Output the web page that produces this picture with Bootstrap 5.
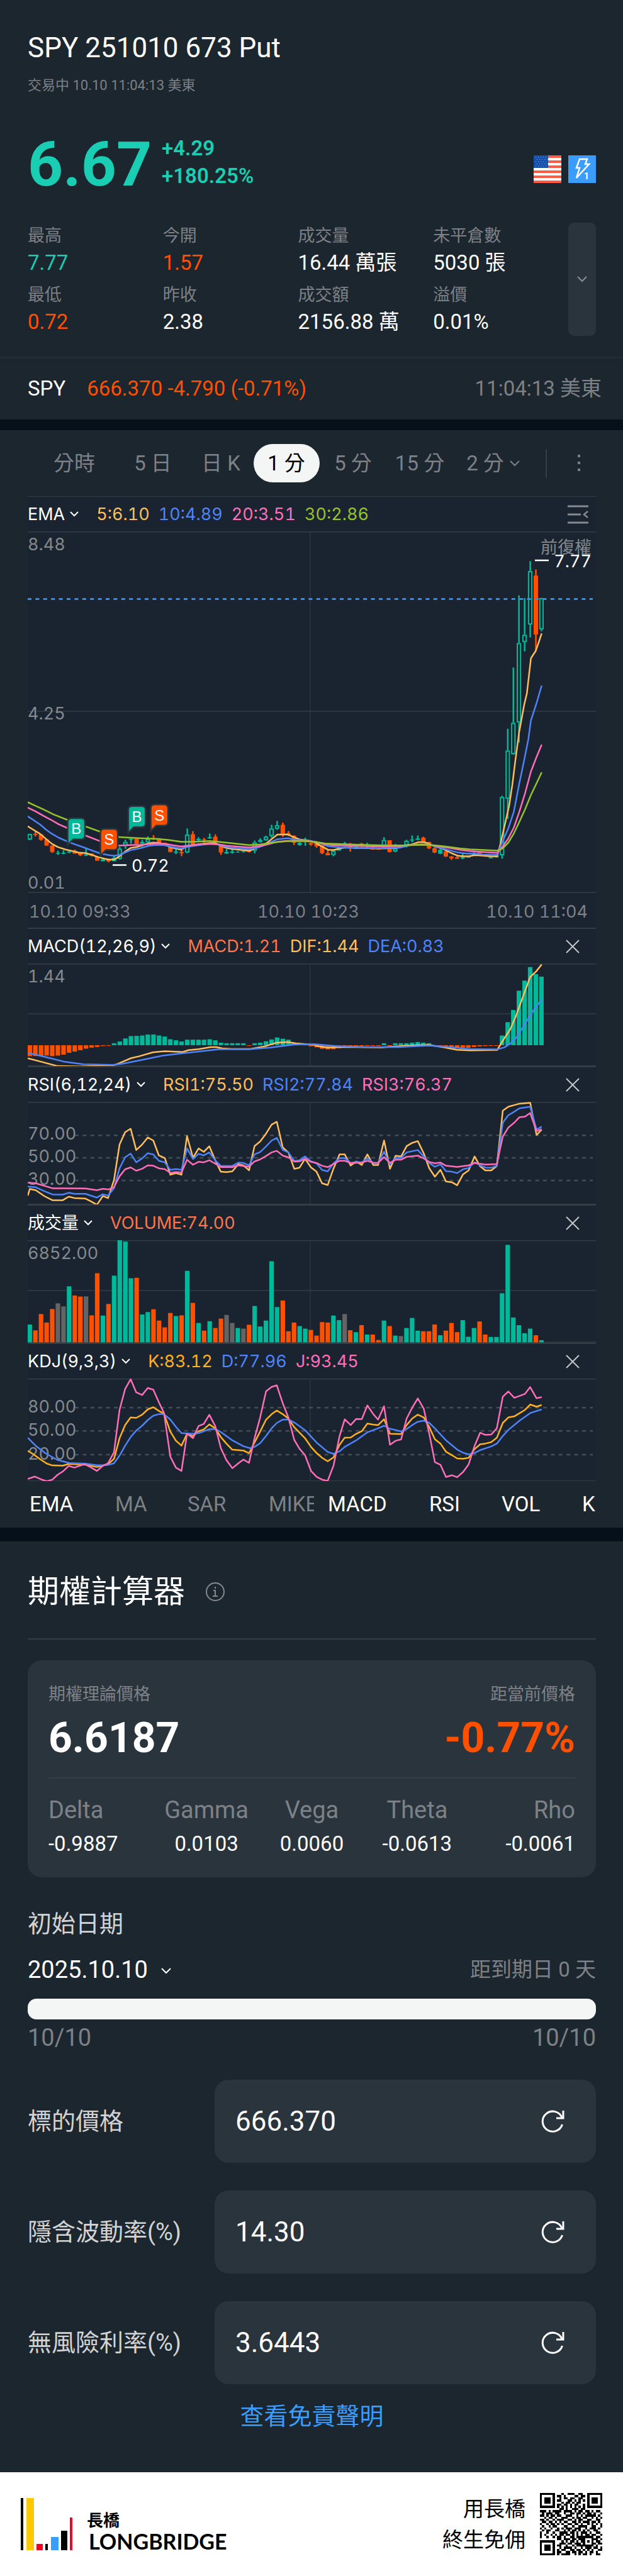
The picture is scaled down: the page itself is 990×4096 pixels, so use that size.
<!DOCTYPE html>
<html lang="zh-Hant">
<head>
<meta charset="utf-8">
<meta name="viewport" content="width=device-width, initial-scale=1">
<title>SPY 251010 673 Put</title>
<link href="https://cdn.jsdelivr.net/npm/bootstrap@5.3.0/dist/css/bootstrap.min.css" rel="stylesheet">
<style>
  :root{--page:#1c262e;--panel:#192430;--box:#2a343c;--band:#05101a;--rule:#333d45;--dim:#7d8187;--up:#00b99a;--down:#ff5000;--mint:#19ceb2;--pale:#d2d3d4}
  body{background:var(--page);color:#fff;font-family:Roboto,"Noto Sans CJK TC",sans-serif;font-size:33px;line-height:48px}
  button{font:inherit;color:inherit;background:none;border:0;padding:0}
  svg{display:block;flex:none}
  .side{padding-left:44px;padding-right:43px}
  .dim{color:var(--dim)} .up{color:var(--mint)} .down{color:var(--down)} .pale{color:var(--pale)}
  .band{background:var(--band)}
  .band-a{height:17px} .band-b{height:22px}
  .title{font-size:44px;line-height:50px;font-weight:400;padding-top:51px;margin:0}
  .subtitle{font-size:22px;line-height:28px;margin-top:21px}
  .price-row{margin-top:64px}
  .price{font-size:98px;line-height:80px;font-weight:700}
  .change{line-height:44px;font-weight:600;margin-left:16px}
  .tags{gap:11px;margin-bottom:11px}
  .quotes{margin-top:52px;padding-bottom:32px}
  .quote-grid{display:grid;grid-template-columns:repeat(4,minmax(0,1fr));row-gap:8px;padding-top:2px;margin:0;white-space:nowrap}
  .quote-grid dt{font-size:27px;line-height:38px;font-weight:400;color:var(--dim)}
  .quote-grid dd{margin:0}
  .more{background:var(--box);border-radius:9px;width:44px;height:180px}
  .under{border-top:1px solid #29333b;height:99px;padding-left:44px;padding-right:34px}
  .under .last{margin-left:34px}
  .periods{height:105px;padding-left:12px}
  .period-grid{display:grid;grid-template-columns:124fr 126fr 90fr 118fr 94fr 118fr 116fr;width:786px;flex:0 1 auto}
  .period-grid button{white-space:nowrap;color:var(--dim);height:61px}
  .period-grid .on{background:#f4f6f6;color:#000;border-radius:31px;width:105px}
  .vr-line{width:2px;height:46px;background:var(--rule);margin-left:25px}
  .chart-area{background:var(--panel);font-family:Inter,"Noto Sans CJK TC",sans-serif;font-size:27px;line-height:32px;font-variant-numeric:tabular-nums;margin-left:44px;margin-right:43px}
  .chart-area svg text{font-size:27px}
  .legend-row{height:57px;border-top:2px solid var(--rule);padding-right:26px;white-space:nowrap}
  .legend-top{height:56px;border-top:1px solid var(--rule);padding-right:12px}
  .legend-row .chev{margin-left:8px;margin-right:28px}
  .vals{gap:14px}
  .plot{width:100%;height:auto}
  .axis{height:55px;padding:5px 13px 0 2px;color:var(--dim)}
  .c-o{color:#ffbd5b}.c-b{color:#4f83f7}.c-p{color:#ff6fb9}.c-g{color:#97c22b}.c-r{color:#ff7549}.c-k{color:#ffb01f}
  .picks{height:74px;white-space:nowrap}
  .pick-grid{display:grid;overflow:hidden}
  .pick-grid button{text-align:left}
  .picks-main{grid-template-columns:136px 115px 129px 75px;width:455px;padding-left:3px}
  .picks-sub{grid-template-columns:161px 115px 128px 80px;flex:1 1 0;margin-left:22px}
  .calc-head{height:156px;border-bottom:2px solid var(--rule);padding-top:6px;gap:32px}
  .calc-head h2{font-size:50px;line-height:60px;font-weight:400;margin:0}
  .result{background:var(--box);border-radius:22px;margin-top:33px;padding:36px 33px 31px}
  .cap{font-size:27px;line-height:36px;color:var(--dim)}
  .big{font-size:66px;line-height:80px;font-weight:700;margin-top:12px}
  .greeks{border-top:2px solid #343e46;margin-top:22px;padding-top:26px;display:grid;grid-template-columns:repeat(5,1fr);text-align:center}
  .greeks dt{font-size:38px;line-height:48px;font-weight:400;color:var(--dim)}
  .greeks dd{line-height:44px;margin:8px 0 0}
  .t38{font-size:38px;line-height:48px}
  .date-head{margin-top:50px}
  .date-row{margin-top:25px}
  .date-pick{appearance:none;background:transparent url("data:image/svg+xml,%3Csvg xmlns='http://www.w3.org/2000/svg' viewBox='0 0 18 12'%3E%3Cpath d='M2 2l7 7 7-7' fill='none' stroke='white' stroke-width='2'/%3E%3C/svg%3E") no-repeat right 14px/18px 12px;background-position:right 0 top 20px;border:0;color:#fff;padding:0 38px 0 0;height:48px}
  .span-range{appearance:none;display:block;width:100%;height:33px;border-radius:14px;background:#f4f6f6;margin:22px 0 5px}
  .span-range::-webkit-slider-thumb{appearance:none;width:33px;height:33px;background:transparent}
  .params{margin-top:43px;display:grid;row-gap:44px}
  .param{display:grid;grid-template-columns:minmax(0,297fr) minmax(0,606fr);align-items:center;white-space:nowrap}
  .field{background:var(--box);border-radius:22px;height:132px;padding:0 50px 0 33px}
  .field input{background:none;border:0;color:#fff;font-size:44px;line-height:52px;padding:0;min-width:0;flex:1 1 0;outline:0}
  .legal{margin-top:27px;padding-bottom:65px}
  .legal a{color:#3b9dfb}
  .brand-bar{background:#fff;color:#000;height:165px;padding:0 33px}
  .brand-cn{font-size:26px;line-height:30px;font-weight:700;margin-left:-3px}
  .brand-en{font-family:Lato,sans-serif;font-size:34px;line-height:36px;font-weight:700}
  .brand-name{margin-left:25px;padding-top:24px}
  .slogan{line-height:49px;margin-right:23px}
</style>
</head>
<body>
<header class="side">
  <h1 class="title">SPY 251010 673 Put</h1>
  <div class="subtitle dim">交易中 10.10 11:04:13 美東</div>
  <div class="price-row d-flex align-items-end up">
    <div class="price">6.67</div>
    <div class="change"><div>+4.29</div><div>+180.25%</div></div>
    <div class="tags d-flex ms-auto">
      <svg width="44" height="44" viewBox="0 0 44 44" aria-label="US"><rect width="44" height="44" fill="#fff"/><path d="M0 2h44M0 10h44M0 18h44M0 26h44M0 34h44M0 42h44" stroke="#ff5a43" stroke-width="4"/><rect width="23" height="20" fill="#1650a8"/><path d="M3 3h19M5 6.500h17M3 10h19M5 13.500h17M3 17h19" stroke="#8fb4e0" stroke-width="1" stroke-dasharray="1 3"/></svg>
      <svg width="44" height="44" viewBox="0 0 44 44" aria-label="Level 1"><rect width="44" height="44" fill="#3b9dfb"/><path d="M18 6h12l-3 8h6L13 36l5-16h-5z" fill="none" stroke="#fff" stroke-width="2.500"/><text x="25" y="38" font-size="14" font-weight="700" fill="#fff">1</text></svg>
    </div>
  </div>
  <div class="quotes d-flex">
    <dl class="quote-grid flex-grow-1">
      <div><dt>最高</dt><dd class="up">7.77</dd></div>
      <div><dt>今開</dt><dd class="down">1.57</dd></div>
      <div><dt>成交量</dt><dd>16.44 萬張</dd></div>
      <div><dt>未平倉數</dt><dd>5030 張</dd></div>
      <div><dt>最低</dt><dd class="down">0.72</dd></div>
      <div><dt>昨收</dt><dd>2.38</dd></div>
      <div><dt>成交額</dt><dd>2156.88 萬</dd></div>
      <div><dt>溢價</dt><dd>0.01%</dd></div>
    </dl>
    <button class="more d-flex align-items-center justify-content-center" aria-label="更多"><svg width="16" height="10" viewBox="0 0 16 10"><path d="M1 1l7 7 7-7" fill="none" stroke="#8b8f94" stroke-width="2"/></svg></button>
  </div>
</header>
<div class="under d-flex align-items-center">
  <span>SPY</span><span class="down last">666.370 -4.790 (-0.71%)</span><span class="dim ms-auto">11:04:13 美東</span>
</div>
<div class="band band-a"></div>

<main>
  <div class="side"><nav class="periods d-flex align-items-center">
    <div class="period-grid">
      <button>分時</button><button>5 日</button><button>日 K</button><button class="on mx-auto">1 分</button><button>5 分</button><button>15 分</button>
      <button class="d-flex align-items-center justify-content-center">2 分<svg class="ms-2" width="18" height="12" viewBox="0 0 18 12"><path d="M2 2l7 7 7-7" fill="none" stroke="currentColor" stroke-width="2"/></svg></button>
    </div>
    <span class="vr-line"></span>
    <button class="ms-auto me-4 dim" aria-label="選單"><svg width="6" height="30" viewBox="0 0 6 30" fill="currentColor"><rect x="1" y="1" width="4" height="4"/><rect x="1" y="12" width="4" height="4"/><rect x="1" y="23" width="4" height="4"/></svg></button>
  </nav></div>

  <section class="chart-area">
    <div class="legend-row legend-top d-flex align-items-center">
      <button class="d-flex align-items-center">EMA<svg class="chev" width="14" height="10" viewBox="0 0 14 10"><path d="M1 1l6 6 6-6" fill="none" stroke="#fff" stroke-width="2"/></svg></button>
      <div class="vals d-flex"><span class="c-o">5:6.10</span><span class="c-b">10:4.89</span><span class="c-p">20:3.51</span><span class="c-g">30:2.86</span></div>
      <button class="ms-auto" aria-label="收起"><svg width="33" height="30" viewBox="0 0 33 30" fill="none" stroke="#84898f" stroke-width="3"><path d="M0 2h33M0 15h21M0 28h33"/><path d="M32 10l-6 5 6 5" stroke-width="2.500"/></svg></button>
    </div>
    <svg class="plot" id="main" viewBox="0 0 903 575"></svg>
    <div class="axis d-flex align-items-center justify-content-between"><span>10.10 09:33</span><span>10.10 10:23</span><span>10.10 11:04</span></div>

    <div class="legend-row d-flex align-items-center">
      <button class="d-flex align-items-center">MACD(12,26,9)<svg class="chev" width="14" height="10" viewBox="0 0 14 10"><path d="M1 1l6 6 6-6" fill="none" stroke="#fff" stroke-width="2"/></svg></button>
      <div class="vals d-flex"><span class="c-r">MACD:1.21</span><span class="c-o">DIF:1.44</span><span class="c-b">DEA:0.83</span></div>
      <button class="ms-auto" aria-label="關閉"><svg width="22" height="22" viewBox="0 0 22 22"><path d="M1 1l20 20M21 1L1 21" stroke="#c4c7ca" stroke-width="2"/></svg></button>
    </div>
    <svg class="plot" id="macd" viewBox="0 0 903 163"></svg>

    <div class="legend-row d-flex align-items-center">
      <button class="d-flex align-items-center">RSI(6,12,24)<svg class="chev" width="14" height="10" viewBox="0 0 14 10"><path d="M1 1l6 6 6-6" fill="none" stroke="#fff" stroke-width="2"/></svg></button>
      <div class="vals d-flex"><span class="c-o">RSI1:75.50</span><span class="c-b">RSI2:77.84</span><span class="c-p">RSI3:76.37</span></div>
      <button class="ms-auto" aria-label="關閉"><svg width="22" height="22" viewBox="0 0 22 22"><path d="M1 1l20 20M21 1L1 21" stroke="#c4c7ca" stroke-width="2"/></svg></button>
    </div>
    <svg class="plot" id="rsi" viewBox="0 0 903 163"></svg>

    <div class="legend-row d-flex align-items-center">
      <button class="d-flex align-items-center">成交量<svg class="chev" width="14" height="10" viewBox="0 0 14 10"><path d="M1 1l6 6 6-6" fill="none" stroke="#fff" stroke-width="2"/></svg></button>
      <div class="vals d-flex"><span class="c-r">VOLUME:74.00</span></div>
      <button class="ms-auto" aria-label="關閉"><svg width="22" height="22" viewBox="0 0 22 22"><path d="M1 1l20 20M21 1L1 21" stroke="#c4c7ca" stroke-width="2"/></svg></button>
    </div>
    <svg class="plot" id="vol" viewBox="0 0 903 163"></svg>

    <div class="legend-row d-flex align-items-center">
      <button class="d-flex align-items-center">KDJ(9,3,3)<svg class="chev" width="14" height="10" viewBox="0 0 14 10"><path d="M1 1l6 6 6-6" fill="none" stroke="#fff" stroke-width="2"/></svg></button>
      <div class="vals d-flex"><span class="c-k">K:83.12</span><span class="c-b">D:77.96</span><span class="c-p">J:93.45</span></div>
      <button class="ms-auto" aria-label="關閉"><svg width="22" height="22" viewBox="0 0 22 22"><path d="M1 1l20 20M21 1L1 21" stroke="#c4c7ca" stroke-width="2"/></svg></button>
    </div>
    <svg class="plot" id="kdj" viewBox="0 0 903 163"></svg>
  </section>

  <div class="side"><div class="picks d-flex align-items-center">
    <div class="pick-grid picks-main"><button>EMA</button><button class="dim">MA</button><button class="dim">SAR</button><button class="dim">MIKE</button></div>
    <div class="pick-grid picks-sub"><button>MACD</button><button>RSI</button><button>VOL</button><button>KDJ</button></div>
  </div></div>
  <div class="band band-b"></div>

  <section class="side">
    <div class="calc-head d-flex align-items-center">
      <h2>期權計算器</h2>
      <button aria-label="說明"><svg width="32" height="32" viewBox="0 0 32 32" fill="none" stroke="#84898f" stroke-width="2"><circle cx="16" cy="16" r="14"/><path d="M13 14h3v9M12 23h8M16 8v3"/></svg></button>
    </div>
    <div class="result">
      <div class="d-flex justify-content-between">
        <div><div class="cap">期權理論價格</div><div class="big">6.6187</div></div>
        <div class="text-end"><div class="cap">距當前價格</div><div class="big down">-0.77%</div></div>
      </div>
      <dl class="greeks mb-0">
        <div class="text-start"><dt>Delta</dt><dd>-0.9887</dd></div>
        <div><dt>Gamma</dt><dd>0.0103</dd></div>
        <div><dt>Vega</dt><dd>0.0060</dd></div>
        <div><dt>Theta</dt><dd>-0.0613</dd></div>
        <div class="text-end"><dt>Rho</dt><dd>-0.0061</dd></div>
      </dl>
    </div>
    <label class="date-head t38 pale d-block" for="start">初始日期</label>
    <div class="date-row d-flex justify-content-between align-items-center">
      <select id="start" class="date-pick t38"><option>2025.10.10</option></select>
      <span class="dim">距到期日 0 天</span>
    </div>
    <input class="span-range" type="range" min="0" max="1" value="0" aria-label="日期">
    <div class="d-flex justify-content-between t38 dim"><span>10/10</span><span>10/10</span></div>

    <div class="params">
      <div class="param"><label class="t38 pale" for="p1">標的價格</label><div class="field d-flex align-items-center"><input id="p1" value="666.370"><button aria-label="重設"><svg width="38" height="38" viewBox="0 0 38 38" fill="none" stroke="#fff" stroke-width="3"><path d="M34.500 24A16 16 0 1 1 34 13"/><path d="M36 2v12H25"/></svg></button></div></div>
      <div class="param"><label class="t38 pale" for="p2">隱含波動率(%)</label><div class="field d-flex align-items-center"><input id="p2" value="14.30"><button aria-label="重設"><svg width="38" height="38" viewBox="0 0 38 38" fill="none" stroke="#fff" stroke-width="3"><path d="M34.500 24A16 16 0 1 1 34 13"/><path d="M36 2v12H25"/></svg></button></div></div>
      <div class="param"><label class="t38 pale" for="p3">無風險利率(%)</label><div class="field d-flex align-items-center"><input id="p3" value="3.6443"><button aria-label="重設"><svg width="38" height="38" viewBox="0 0 38 38" fill="none" stroke="#fff" stroke-width="3"><path d="M34.500 24A16 16 0 1 1 34 13"/><path d="M36 2v12H25"/></svg></button></div></div>
    </div>
    <div class="legal t38 text-center"><a href="#" class="text-decoration-none">查看免責聲明</a></div>
  </section>
</main>

<footer class="brand-bar d-flex align-items-center">
  <svg width="83" height="83" viewBox="0 0 83 83"><path d="M0 0h4v83H0zM39 73h4v10h-4zM64 52h10v31H64z"/><path d="M9 0h12v83H9z" fill="#ffc800"/><path d="M25 73h10v10H25zM78 31h4v52h-4z" fill="#f5001f"/><path d="M48 62h12v21H48z" fill="#3b9dfb"/></svg>
  <div class="brand-name"><div class="brand-cn">長橋</div><div class="brand-en">LONGBRIDGE</div></div>
  <div class="slogan text-end ms-auto">用長橋<br>終生免佣</div>
  <svg id="qr" width="99" height="99" viewBox="0 0 29 29" shape-rendering="crispEdges" aria-label="QR"></svg>
</footer>

<script src="https://cdn.jsdelivr.net/npm/bootstrap@5.3.0/dist/js/bootstrap.bundle.min.js"></script>
<script>
const UP='#00b99a',DOWN='#ff5000',FLAT='#646464',OR='#ffbd5b',BL='#4f83f7',PK='#ff6fb9',GR='#97c22b',KO='#ffb01f',GRID='#333d45';
const PITCH=8.935, barX=i=>3.3+i*PITCH;
const rect=(x,y,w,h,f)=>`<rect x="${x.toFixed(1)}" y="${y.toFixed(1)}" width="${w}" height="${Math.max(h,1).toFixed(1)}" fill="${f}"/>`;
const curve=(s,fx,fy,c)=>`<polyline fill="none" stroke="${c}" stroke-width="2.500" stroke-linejoin="round" points="${s.trim().split(/\s+/).map(p=>{const[a,b]=p.split(',');return fx(+a).toFixed(1)+','+fy(+b).toFixed(1)}).join(' ')}"/>`;
const hl=(y,w=1.5)=>`<path d="M0 ${y}H903" stroke="${GRID}" stroke-width="${w}"/>`;
const vl=h=>`<path d="M449 0V${h}" stroke="${GRID}" stroke-width="1"/>`;
const dots=(y,c,w,x=0)=>`<path d="M${x} ${y}H898" stroke="${c}" stroke-width="${w}" stroke-dasharray="6 6.400"/>`;
const label=(x,y,t,c='#84898d',e='')=>`<text x="${x}" y="${y}" fill="${c}" ${e}>${t}</text>`;
const put=(id,s)=>document.getElementById(id).innerHTML=s;
const wx=x=>x*.6311-44;

/* price chart: kind, high, body top, body bottom, low */
const candles=`h232,232,266,266 r218,232,238,248 r235,235,267,272 r262,265,302,302 r302,302,340,346 g333,345,349,357 g330,345,351,354 g330,338,344,347 r326,333,350,350 r343,345,360,364 g322,355,362,362 r348,350,362,367 r368,368,392,392 g380,385,395,395 r385,385,396,402 g365,375,395,395 h310,320,382,384 h267,280,305,322 g256,262,268,290 r262,262,292,292 g268,280,290,310 h247,262,283,287 r240,258,265,268 r266,266,285,287 r285,285,303,305 r310,310,340,342 g320,338,344,353 r328,340,347,365 h200,236,344,346 r216,234,295,297 g252,262,270,280 r256,265,270,285 g230,252,259,262 r235,249,275,275 r300,302,343,357 g323,340,349,352 g325,338,345,350 g335,340,343,343 g333,336,340,343 r328,333,340,343 h272,283,333,348 g258,268,280,284 h243,248,271,274 h178,200,245,255 h155,180,202,208 r165,178,235,250 r215,228,240,245 r240,243,285,298 g282,285,298,303 g255,265,278,303 r285,287,296,303 r290,293,307,315 r300,302,347,353 r322,347,360,360 h325,333,358,365 g318,320,332,332 g280,288,294,300 r286,292,316,338 g300,308,322,322 r286,290,300,310 g285,295,305,315 r310,320,326,326 r315,318,326,326 h252,268,320,320 r270,270,340,343 h292,318,338,338 g300,305,310,315 h267,273,300,313 g242,266,272,282 g242,260,267,270 r249,255,280,280 r279,281,318,323 r312,318,343,347 g322,327,350,353 r335,337,367,370 r365,367,377,387 r360,372,381,381 g345,370,378,383 g362,368,374,374 g338,345,360,360 r338,342,348,348 r355,360,368,368 g365,370,377,377 g360,362,373,373 h5,12,360,380 h-395,-265,23,143 h-760,-430,-243,-243 h-1190,-906,-432,-312 h-1174,-955,-912,-856 h-1394,-1335,-1016,-939 r-1344,-1308,-957,-858 h-1174,-1174,-987,-976`.split(' ');
const my=y=>y*.26667+419, mx=x=>x*.26667-4;
let s=hl(.75)+hl(286)+hl(574)+vl(575)+label(0,29.500,'8.48')+label(0,299,'4.25')+label(0,568,'0.01')+label(896,35,'前復權','#84898d','text-anchor="end"');
candles.forEach((t,i)=>{const[a,b,c,d]=t.slice(1).split(',').map(v=>my(+v)),x=barX(i),k=t[0],f=k=='r'?DOWN:UP;
  if(k=='h'){s+=rect(x-1.2,a,2.5,b-a,f)+rect(x-1.2,c,2.5,d-c,f)+`<rect x="${(x-2.600).toFixed(1)}" y="${(b+1).toFixed(1)}" width="5.200" height="${Math.max(c-b-2,1).toFixed(1)}" fill="none" stroke="${f}" stroke-width="2"/>`}
  else s+=rect(x-1.2,a,2.5,d-a,f)+rect(x-3.5,b,7,c-b,f)});
s+=dots(107.500,'#2f8ff0',3);
s+=curve('15,187 50,208 90,233 125,263 160,292 195,311 240,325 280,334 320,344 360,347 400,358 430,369 470,380 500,385 530,385 560,368 595,338 628,316 665,310 700,298 735,289 765,284 800,287 835,297 865,312 900,320 930,327 965,305 1000,298 1050,292 1100,287 1135,287 1165,303 1200,316 1235,323 1280,327 1335,333 1370,318 1400,306 1440,287 1470,262 1503,236 1565,236 1600,252 1635,265 1670,270 1705,275 1735,288 1770,308 1805,327 1840,328 1870,320 1905,314 1970,316 2030,318 2110,320 2210,317 2260,305 2310,293 2345,281 2380,282 2410,293 2445,308 2490,322 2540,347 2580,363 2610,366 2645,366 2680,359 2730,362 2770,366 2813,366 2830,300 2860,170 2885,60 2903,-60 2919,-190 2943,-370 2974,-540 2990,-606 3014,-815 3028,-837 3042,-858 3059,-906 3078,-963',mx,my,OR);
s+=curve('15,127 50,150 90,177 125,207 160,232 200,255 250,277 290,292 350,313 400,332 450,350 500,359 530,363 560,358 595,343 630,328 665,322 700,314 735,304 770,299 830,299 860,307 900,315 930,320 965,310 1000,305 1050,297 1100,292 1140,294 1180,305 1230,315 1335,322 1380,316 1430,298 1470,279 1503,264 1565,258 1610,267 1670,271 1730,279 1770,293 1805,306 1870,312 1970,316 2090,318 2230,315 2280,303 2330,294 2410,296 2450,308 2510,325 2570,341 2630,350 2680,350 2730,355 2813,357 2844,280 2879,200 2912,100 2945,-70 2974,-210 2998,-330 3014,-445 3045,-540 3078,-652',mx,my,BL);
s+=curve('15,75 60,97 110,125 160,152 200,175 250,197 350,238 450,277 500,292 560,302 620,299 700,297 770,291 830,291 880,300 930,307 1000,299 1100,291 1150,294 1200,303 1335,313 1400,305 1450,294 1503,279 1560,274 1670,273 1730,280 1780,293 1840,300 1970,304 2090,307 2230,306 2290,298 2390,295 2450,304 2530,316 2590,327 2650,335 2730,340 2813,345 2844,310 2879,260 2912,195 2945,100 2979,-10 3014,-140 3045,-220 3078,-300',mx,my,PK);
s+=curve('15,43 60,64 110,87 170,117 250,148 350,184 450,220 500,238 560,251 680,258 800,263 860,269 930,279 1000,279 1100,275 1160,280 1230,288 1335,299 1400,295 1450,289 1503,281 1560,276 1670,276 1730,280 1790,290 1870,293 2030,298 2150,301 2260,301 2330,297 2410,298 2490,306 2590,319 2650,324 2730,328 2813,332 2844,320 2879,285 2912,230 2945,160 2979,85 3014,0 3045,-65 3078,-135',mx,my,GR);
[['B',258,143,UP],['S',453,207,DOWN],['B',619,71,UP],['S',753,62,DOWN]].forEach(([t,X,Y,f])=>{const x=mx(X),y=my(Y);
  s+=`<path d="M${x} ${y+38}V${y+5}q0-5 5-5h15q5 0 5 5v21q0 5-5 5h-13z" fill="${f}" stroke="#2b363d" stroke-width="5" paint-order="stroke"/><text x="${x+12.5}" y="${y+24}" fill="#fff" text-anchor="middle" style="font-size:24px;font-family:'Liberation Sans',sans-serif">${t}</text>`});
s+=`<path d="M135 530.500h22M806 46h22" stroke="#fff" stroke-width="2.500"/>`+label(165,541,'0.72','#fff')+label(896,57,'7.77','#fff','text-anchor="end"');
put('main',s);

/* MACD */
const hist=[-55,-54,-53,-52,-55,-52,-47,-38,-32,-25,-17,-12,-9,-4,-1,10,19,34,46,47,49,54,54,49,44,30,25,19,28,28,28,28,30,25,13,10,10,10,10,-1,10,13,20,29,39,33,28,13,10,3,-5,-10,-18,-21,-20,-15,-10,-9,-7,-5,-3,-3,-3,10,-2,10,10,10,13,16,13,10,-3,-5,-6,-8,-10,-12,-13,-9,-6,-4,-3,-2,49,116,177,274,325,393,358,345];
const dy=y=>y*.31633-76;
s=hl(.75)+hl(80)+hl(162.5,1)+vl(163)+label(0,30,'1.44');
hist.forEach((v,i)=>{const h=Math.abs(v)*.31633;s+=rect(barX(i)-3.600,v>0?130-h:130,7.200,h,v>0?UP:DOWN)});
s+=curve('70,717 100,732 145,756 200,758 285,753 300,742 330,716 350,707 385,687 415,681 460,685 475,676 500,671 530,661 545,661 560,667 585,670 630,670 665,658 695,639 725,635 745,642 790,649 805,658 825,663 860,660 960,662 1030,653 1080,650 1120,662 1150,674 1185,677 1252,675 1265,632 1285,570 1300,500 1318,400 1335,308 1350,280 1364,245',wx,dy,OR);
s+=curve('70,690 110,708 160,733 210,747 285,750 310,744 370,720 410,703 450,694 500,683 550,672 630,671 680,663 740,648 790,646 850,656 920,661 1000,661 1080,653 1130,660 1180,670 1252,672 1270,662 1285,643 1300,613 1320,550 1340,485 1364,420',wx,dy,BL);
put('macd',s);

/* RSI */
const ry=y=>y*.31633-296;
s=hl(.75)+hl(162.5,1)+vl(163);
[[1104,'70.00'],[1217,'50.00'],[1331,'30.00']].forEach(([y,t])=>s+=dots(ry(y),'#444d54',2.5,75)+label(0,ry(y)+7,t));
s+=curve('70,1407 75,1374 90,1380 112,1410 132,1430 158,1430 173,1412 187,1419 215,1422 230,1437 244,1453 259,1409 272,1420 287,1330 301,1150 315,1088 329,1071 343,1178 358,1150 372,1115 386,1130 400,1205 415,1218 429,1302 443,1294 457,1302 471,1108 486,1217 500,1170 513,1187 527,1159 542,1230 556,1287 570,1289 585,1285 600,1249 613,1255 627,1280 641,1158 655,1135 670,1095 684,1050 697,1036 712,1165 726,1190 741,1272 754,1267 768,1222 783,1265 797,1287 811,1345 825,1354 840,1270 855,1200 868,1200 883,1256 897,1235 911,1253 925,1200 940,1253 952,1253 967,1130 982,1272 996,1207 1010,1210 1024,1158 1038,1142 1052,1133 1067,1195 1081,1270 1095,1312 1109,1277 1123,1336 1138,1340 1151,1355 1166,1300 1180,1280 1195,1210 1209,1260 1222,1280 1237,1280 1251,1258 1266,980 1280,960 1295,952 1308,945 1335,940 1351,1102 1364,1075',wx,ry,OR);
s+=curve('70,1362 90,1365 112,1385 132,1401 158,1402 173,1393 187,1398 215,1398 244,1417 259,1400 272,1407 287,1370 301,1270 315,1215 329,1196 343,1240 358,1220 372,1194 386,1200 400,1232 415,1240 429,1278 443,1273 457,1278 471,1170 486,1223 500,1197 513,1205 527,1190 542,1230 556,1258 585,1258 600,1241 613,1243 627,1255 641,1200 655,1188 670,1160 684,1130 697,1117 712,1177 726,1190 741,1233 754,1230 768,1210 783,1235 797,1245 811,1278 825,1285 840,1245 855,1219 868,1219 883,1243 897,1237 911,1241 925,1219 940,1243 952,1243 967,1186 982,1250 996,1218 1010,1218 1024,1190 1052,1178 1067,1210 1081,1243 1095,1262 1109,1250 1123,1284 1138,1287 1151,1294 1166,1275 1180,1268 1195,1240 1209,1255 1222,1266 1237,1267 1251,1257 1266,1040 1280,1003 1295,985 1308,968 1335,960 1351,1075 1364,1060',wx,ry,BL);
s+=curve('70,1342 90,1345 132,1370 158,1370 215,1371 244,1380 259,1373 272,1376 287,1365 301,1310 315,1275 329,1265 343,1282 358,1272 372,1255 386,1257 400,1270 415,1274 429,1293 443,1288 457,1291 471,1227 486,1252 500,1237 513,1240 527,1229 556,1264 585,1264 600,1255 627,1262 641,1235 655,1225 670,1208 684,1190 697,1182 712,1206 726,1215 741,1236 754,1235 768,1222 783,1237 797,1243 811,1257 825,1264 855,1232 868,1232 883,1244 911,1241 925,1232 940,1242 952,1242 967,1214 982,1243 996,1227 1010,1227 1024,1212 1052,1206 1067,1220 1081,1238 1095,1245 1109,1241 1123,1257 1151,1263 1180,1255 1195,1243 1222,1251 1251,1249 1266,1110 1280,1065 1295,1040 1308,1013 1322,1010 1335,992 1351,1083 1364,1073',wx,ry,PK);
put('rsi',s);

/* volume */
const vols='g82 r55 r130 r91 r153 x179 x165 g257 r215 r210 x211 r124 r317 g123 r176 g306 g469 g462 g294 r296 g128 g139 r152 r100 r69 r135 g121 r124 g328 r181 g89 r54 g97 r66 r109 x126 x89 g66 x63 r81 g167 g73 g100 g372 g162 r192 r51 r91 g75 g63 r57 r31 r93 r91 g123 g102 x130 r56 g47 r79 g36 r36 r11 g100 r75 g31 x29 g66 g112 g54 r51 r51 r82 g33 r54 r89 r47 g102 g26 g66 r96 r36 g25 g25 g225 g447 g114 g79 g42 g63 r33 g10'.split(' ');
s=hl(.75)+hl(80)+hl(162)+vl(163)+label(0,30,'6852.00');
vols.forEach((t,i)=>{const h=+t.slice(1)*.34694;s+=rect(barX(i)-3.600,162.5-h,7.200,h,{g:UP,r:DOWN,x:FLAT}[t[0]])});
put('vol',s);

/* KDJ */
const ky=y=>y*.34694-273;
s=hl(.75)+hl(162.5,1)+vl(163);
[[920,'80.00'],[1027,'50.00'],[1136,'20.00']].forEach(([y,t])=>s+=dots(ky(y),'#444d54',2.5,75)+label(0,ky(y)+8,t));
s+=curve('70,1118 85,1135 100,1155 118,1177 132,1185 158,1186 173,1178 215,1182 230,1187 244,1192 259,1185 272,1180 287,1155 301,1060 315,1000 329,965 343,967 358,952 372,928 386,918 400,935 413,948 429,1030 443,1072 457,1094 471,1040 486,1050 500,1028 513,1020 527,997 542,1015 556,1055 570,1085 585,1113 613,1117 627,1129 641,1080 655,1030 670,975 684,950 697,933 712,950 726,970 741,1010 768,1060 783,1100 797,1128 811,1150 825,1166 840,1148 855,1090 868,1058 883,1057 897,1040 911,1028 925,993 940,998 952,1000 967,973 982,1040 1010,1041 1024,1000 1038,970 1052,952 1067,965 1081,1010 1095,1065 1109,1085 1123,1122 1138,1138 1151,1153 1166,1154 1180,1150 1195,1110 1209,1088 1222,1085 1237,1078 1251,1058 1266,990 1280,965 1295,960 1322,930 1335,906 1351,916 1364,908',wx,ky,KO);
s+=curve('70,1058 90,1095 115,1130 145,1160 175,1174 215,1177 244,1184 272,1183 287,1175 301,1140 315,1095 329,1055 343,1025 358,1003 372,977 386,957 400,950 413,950 429,975 443,1008 457,1037 486,1040 500,1037 527,1019 542,1018 556,1032 585,1070 613,1097 630,1106 641,1100 655,1083 670,1050 684,1015 697,990 712,975 726,974 741,988 768,1023 797,1080 825,1123 840,1132 855,1120 868,1100 897,1070 925,1033 952,1015 967,1003 982,1017 1010,1029 1024,1018 1038,1000 1052,985 1067,980 1081,990 1095,1015 1123,1070 1151,1112 1166,1127 1180,1134 1195,1128 1209,1115 1237,1098 1251,1085 1266,1050 1280,1022 1308,980 1335,945 1364,928',wx,ky,BL);
s+=curve('70,1247 88,1236 105,1250 118,1257 132,1250 145,1228 158,1213 173,1187 187,1195 213,1179 230,1195 244,1210 259,1187 272,1175 287,1125 301,930 315,835 329,790 343,850 358,862 372,830 386,838 400,895 413,945 429,1145 443,1195 457,1210 471,1040 486,1060 500,1004 513,995 527,953 542,1005 556,1105 570,1160 585,1198 600,1175 613,1158 627,1173 641,1060 655,965 670,845 684,825 697,818 712,900 726,965 741,1068 754,1108 768,1138 783,1210 797,1237 811,1250 825,1256 840,1185 855,1050 868,974 883,1000 897,972 911,973 925,910 940,950 952,975 967,914 982,1090 996,1072 1010,1066 1024,970 1038,920 1052,878 1067,925 1081,1040 1095,1170 1109,1182 1123,1238 1138,1230 1151,1239 1166,1215 1180,1180 1195,1095 1209,1035 1222,1045 1237,1043 1251,1015 1266,870 1280,846 1295,875 1322,857 1335,826 1351,877 1364,872',wx,ky,PK);
put('kdj',s);

/* QR modules, one string a row */
const qr=`11111110001001110011001111111
10000010110100001101101000001
10111010010110110011001011101
10111010110001101010101011101
10111010001011010110001011101
10000010110110101100101000001
11111110101010101010101111111
00000000011010011101100000000
11101011110111101011011010110
01011101100100110110101101001
11010110110011100101011111010
00101101001110010110110010101
11010010111001101011001100110
01101101010110011010111011010
10010110101001101101001010101
01001011000110010011110011001
10100100101011101110010111010
01011001100101011010101001100
10010010011110110101110100110
10100101011011010101011011001
10010010110100110111111110110
00000000110111011011100011101
11111110001010110101101010110
10000010011101101110100011011
10111010110010010111111110100
10111010010111101001011101101
10111010101100110110101010011
10000010110011011011010110100
11111110101111001010110100110`.split('\n');
s='';qr.forEach((r,y)=>[...r].forEach((c,x)=>{if(c=='1')s+=`<rect x="${x}" y="${y}" width="1" height="1"/>`}));
put('qr',s);
</script>
</body>
</html>
